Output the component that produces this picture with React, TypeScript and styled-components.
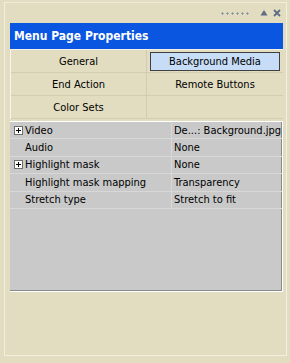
import React from "react";
import styled, { createGlobalStyle } from "styled-components";

const Global = createGlobalStyle`
  html, body { margin: 0; padding: 0; background: #e2ddc1; }
  body { font-family: "DejaVu Sans Condensed", "Liberation Sans", Arial, sans-serif; font-size: 11px; color: #000; }
`;

const Frame = styled.div`
  width: 290px;
  height: 363px;
  box-sizing: border-box;
  background: #e2ddc1;
  padding: 2px 3px 7px 4px;
  display: flex;
  flex-direction: column;
`;

const Inner = styled.div`
  flex: 1;
  border-top: 1px solid #efecda;
  border-left: 1px solid #f1efe2;
  border-right: 1px solid #f1efe2;
  border-bottom: 1px solid #f1efe2;
  display: flex;
  flex-direction: column;
`;

const TitleBar = styled.div`
  height: 20px;
  display: flex;
  align-items: center;
  justify-content: flex-end;
  gap: 5px;
  padding-right: 5px;
`;

const Grip = styled.div`
  width: 30px;
  height: 3px;
  margin-right: 5px;
  background-image: radial-gradient(circle, #7d8aa3 0.9px, transparent 1.2px);
  background-size: 5px 3px;
`;

const IconBtn = styled.svg`
  width: 8px;
  height: 8px;
  display: block;
`;

const Panel = styled.div`
  margin: 0 3px 0 5px;
  flex: 1;
  display: flex;
  flex-direction: column;
`;

const Header = styled.div`
  height: 26px;
  background: #0a56e0;
  color: #fff;
  font-weight: bold;
  font-size: 12px;
  display: flex;
  align-items: center;
  padding-left: 4px;
  border-bottom: 1px solid #f4f2e6;
`;

const Tabs = styled.div`
  display: grid;
  grid-template-columns: 136px 1fr;
  border-left: 1px solid #f7f6ee;
`;

const Tab = styled.div<{ $active?: boolean }>`
  height: 23px;
  box-sizing: border-box;
  display: flex;
  align-items: center;
  justify-content: center;
  border-bottom: 1px solid #d2cdb2;
  & > span {
    box-sizing: border-box;
    width: calc(100% - 6px);
    height: 19px;
    display: flex;
    align-items: center;
    justify-content: center;
    background: ${(p) => (p.$active ? "#c6dcf7" : "transparent")};
    border: 1px solid ${(p) => (p.$active ? "#404040" : "transparent")};
  }
`;

const LeftTab = styled(Tab)`
  border-right: 1px solid #d2cdb2;
`;

const Props = styled.div`
  margin-top: 2px;
  height: 169px;
  background: #c9c9c9;
  border-top: 1px solid #ffffff;
  border-bottom: 1px solid #ffffff;
  border-right: 1px solid #ffffff;
  box-shadow: inset -1px -1px 0 #8a8a8a;
`;

const Row = styled.div`
  display: grid;
  grid-template-columns: 13px 149px 1fr;
  height: 17.4px;
  align-items: center;
  border-bottom: 1px solid #d8d8d8;
  box-sizing: border-box;
`;

const Toggle = styled.div`
  width: 7px;
  height: 7px;
  border: 1px solid #6e6e6e;
  background: #fff;
  margin-left: 4px;
  position: relative;
  &::before {
    content: "";
    position: absolute;
    left: 1px; right: 1px; top: 3px; height: 1px;
    background: #000;
  }
  &::after {
    content: "";
    position: absolute;
    top: 1px; bottom: 1px; left: 3px; width: 1px;
    background: #000;
  }
`;

const Name = styled.div`
  padding-left: 2px;
  white-space: nowrap;
  border-right: 1px solid #d8d8d8;
  height: 100%;
  display: flex;
  align-items: center;
`;

const Value = styled.div`
  padding-left: 2px;
  white-space: nowrap;
  overflow: hidden;
`;

const rows = [
  { name: "Video", value: "De...: Background.jpg", expand: true },
  { name: "Audio", value: "None" },
  { name: "Highlight mask", value: "None", expand: true },
  { name: "Highlight mask mapping", value: "Transparency" },
  { name: "Stretch type", value: "Stretch to fit" },
];

export default function App() {
  return (
    <>
      <Global />
      <Frame>
        <Inner>
          <TitleBar>
            <Grip />
            <IconBtn viewBox="0 0 8 8">
              <path d="M4 1 L7.5 6.5 L0.5 6.5 Z" fill="#5d6b84" />
            </IconBtn>
            <IconBtn viewBox="0 0 8 8">
              <path d="M1 1 L7 7 M7 1 L1 7" stroke="#5d6b84" strokeWidth="1.8" />
            </IconBtn>
          </TitleBar>
          <Panel>
            <Header>Menu Page Properties</Header>
            <Tabs>
              <LeftTab><span>General</span></LeftTab>
              <Tab $active><span>Background Media</span></Tab>
              <LeftTab><span>End Action</span></LeftTab>
              <Tab><span>Remote Buttons</span></Tab>
              <LeftTab><span>Color Sets</span></LeftTab>
              <Tab><span></span></Tab>
            </Tabs>
            <Props>
              {rows.map((r) => (
                <Row key={r.name}>
                  <div>{r.expand ? <Toggle /> : null}</div>
                  <Name>{r.name}</Name>
                  <Value>{r.value}</Value>
                </Row>
              ))}
            </Props>
          </Panel>
        </Inner>
      </Frame>
    </>
  );
}
